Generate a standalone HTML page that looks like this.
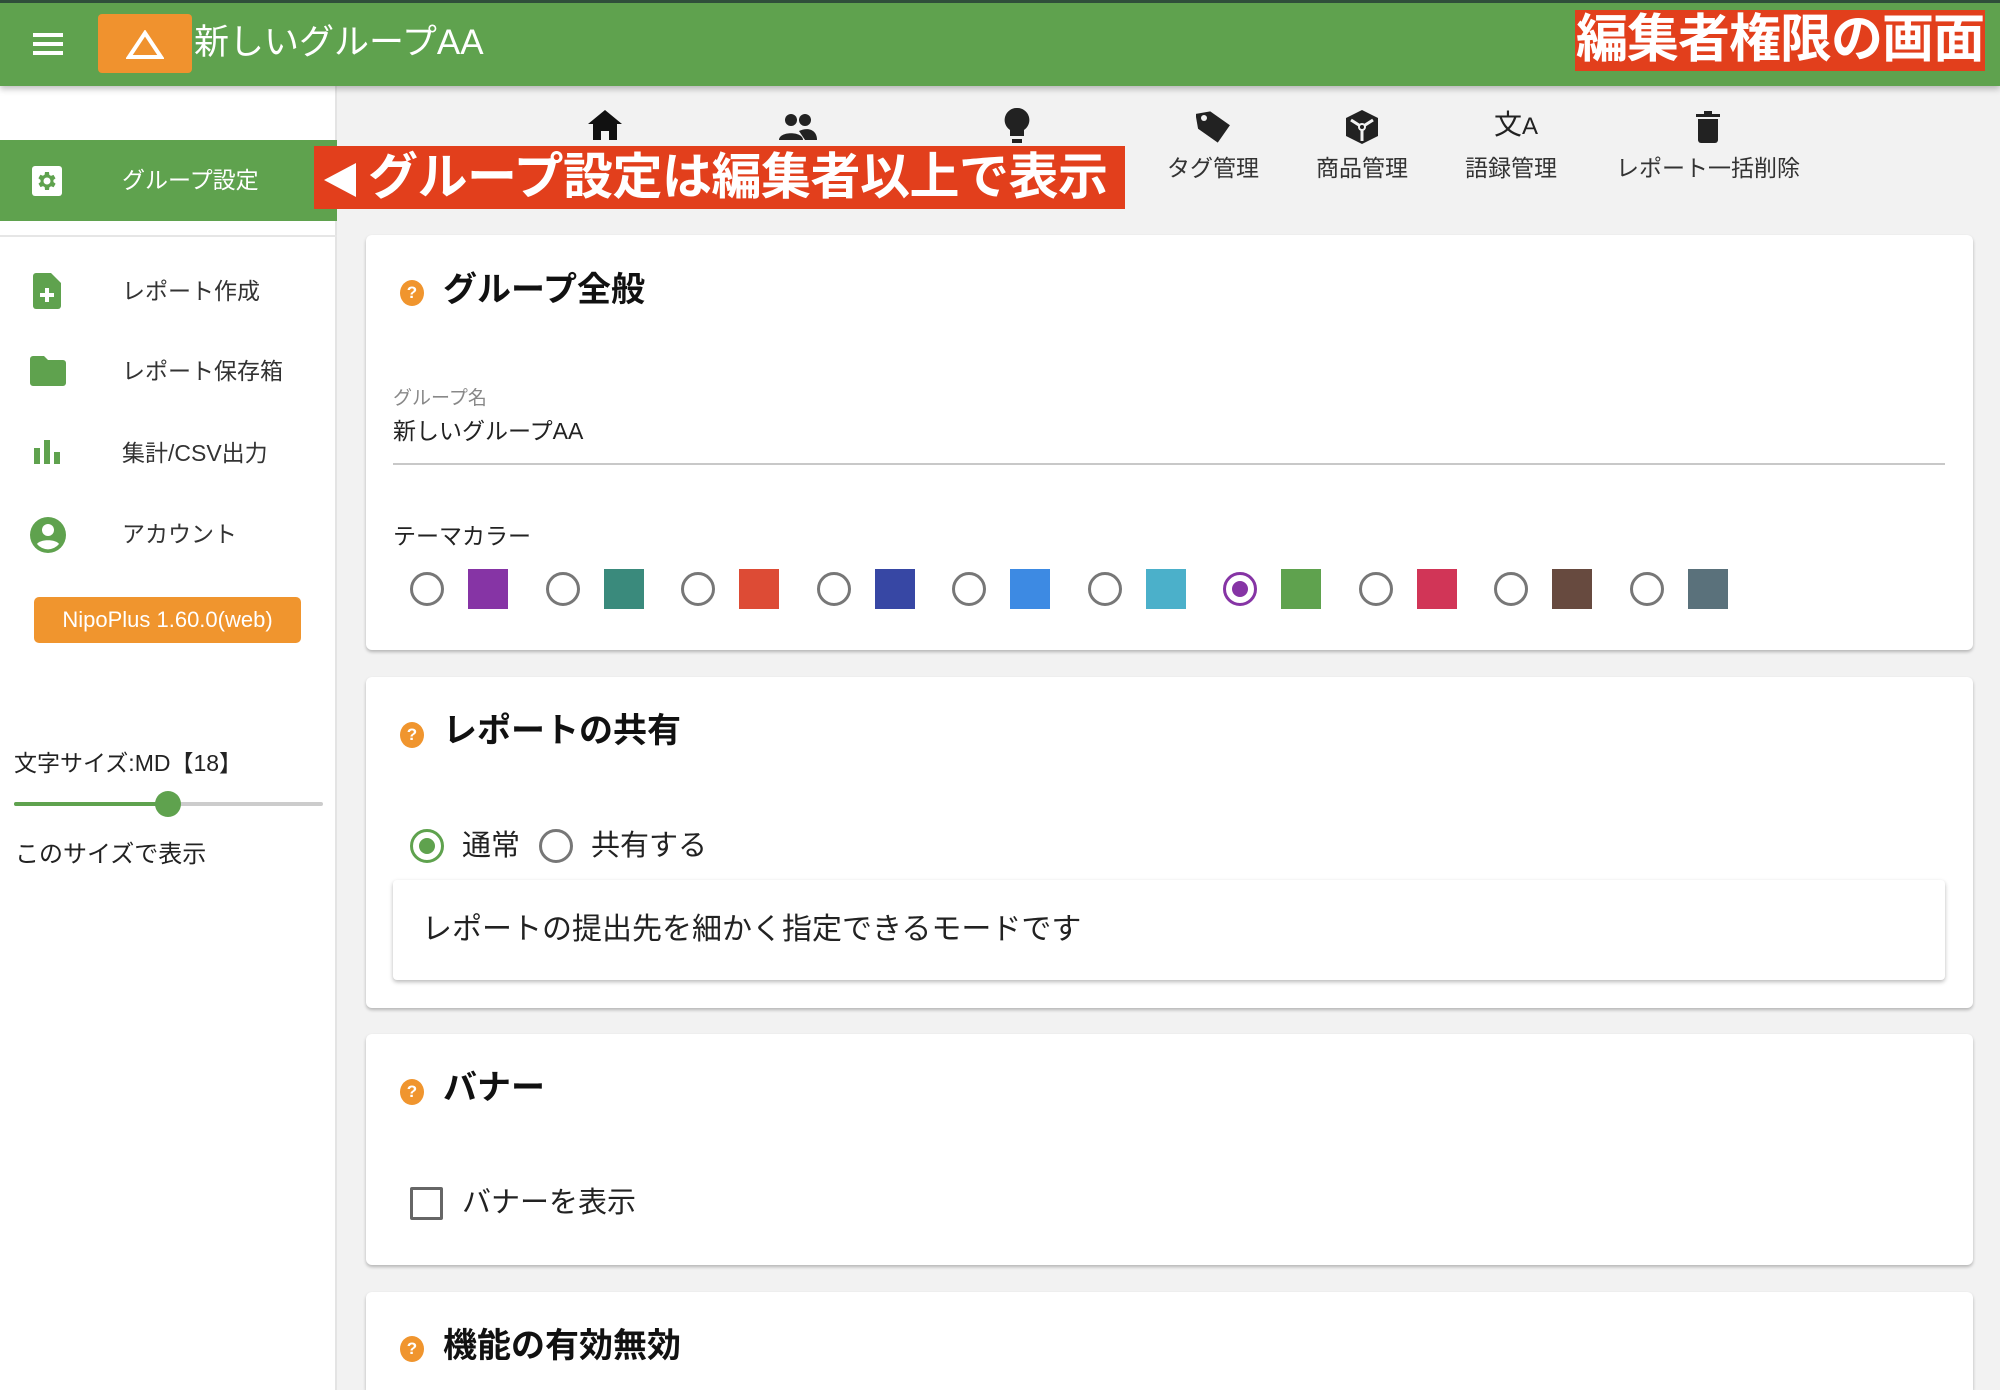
<!DOCTYPE html>
<html><head><meta charset="utf-8">
<style>
*{margin:0;padding:0;box-sizing:border-box}
html,body{width:2000px;height:1390px;overflow:hidden}
body{background:#f2f2f2;font-family:"Liberation Sans","Noto Sans CJK JP",sans-serif;color:#222;position:relative}
.a{position:absolute;white-space:nowrap}
.hdr{left:0;top:0;width:2000px;height:86px;background:#5fa24e;border-top:3px solid #2f4f3a;box-shadow:0 3px 6px rgba(0,0,0,.25);z-index:3}
.side{left:0;top:86px;width:337px;height:1304px;background:#fff;border-right:2px solid #e4e4e4}
.card{background:#fff;border-radius:6px;box-shadow:0 2px 3px rgba(0,0,0,.25);left:366px;width:1607px}
.help{width:24px;height:26px;border-radius:50%;background:#f0952e;color:#fff;font-size:17px;font-weight:bold;text-align:center;line-height:26px}
.ttl{font-size:34px;font-weight:bold;color:#111;line-height:40px}
.rad{width:34px;height:34px;border:3px solid #777;border-radius:50%}
.sw{width:40px;height:40px}
.nl{font-size:23px;color:#333;line-height:30px;transform:translateX(-50%)}
.si{font-size:23px;color:#333;line-height:30px;left:122px}
</style></head><body>
<div class="a hdr"></div>
<div class="a" style="left:33px;top:33px;width:30px;height:4px;background:#fff;z-index:4;box-shadow:0 9px 0 #fff,0 18px 0 #fff"></div>
<div class="a" style="left:98px;top:14px;width:94px;height:59px;background:#f0922e;border-radius:4px;z-index:4"></div>
<svg class="a" style="left:126px;top:30px;z-index:5" width="38" height="30" viewBox="0 0 38 30"><polygon points="19,3 35,27 3,27" fill="none" stroke="#fff" stroke-width="4"/></svg>
<div class="a" style="left:194px;top:21px;font-size:35px;line-height:44px;color:#fff;z-index:4">新しいグループAA</div>
<div class="a" style="left:1575px;top:10px;width:410px;height:61px;background:#e23f1c;z-index:4;color:#fff;font-size:52px;font-weight:bold;line-height:61px;text-align:center;letter-spacing:-1px">編集者権限の画面</div>

<div class="a side"></div>
<div class="a" style="left:0;top:140px;width:337px;height:81px;background:#5fa24e"></div>
<div class="a" style="left:32px;top:166px;width:30px;height:30px;background:#fff;border-radius:3px"></div>
<svg class="a" style="left:35px;top:169px" width="24" height="24" viewBox="0 0 24 24"><path fill="#5fa24e" d="M19.4 13a7.8 7.8 0 0 0 0-2l2.1-1.6-2-3.5-2.5 1a7 7 0 0 0-1.7-1L15 3h-4l-.4 2.8a7 7 0 0 0-1.7 1l-2.5-1-2 3.5L6.6 11a7.8 7.8 0 0 0 0 2l-2.1 1.6 2 3.5 2.5-1a7 7 0 0 0 1.7 1L11 21h4l.4-2.8a7 7 0 0 0 1.7-1l2.5 1 2-3.5zM13 15.5a3.5 3.5 0 1 1 0-7 3.5 3.5 0 0 1 0 7z" transform="translate(-1 0)"/></svg>
<div class="a" style="left:122px;top:165px;font-size:23px;line-height:30px;color:#fff">グループ設定</div>
<div class="a" style="left:0;top:235px;width:337px;height:2px;background:#e6e6e6"></div>

<svg class="a" style="left:33px;top:273px" width="28" height="36" viewBox="0 0 28 36"><path fill="#5fa24e" d="M3 0h15l10 10v23a3 3 0 0 1-3 3H3a3 3 0 0 1-3-3V3a3 3 0 0 1 3-3z"/><path d="M12 15h4v5h5v4h-5v5h-4v-5H7v-4h5z" fill="#fff"/></svg>
<div class="a si" style="top:276px">レポート作成</div>
<svg class="a" style="left:30px;top:356px" width="36" height="30" viewBox="0 0 36 30"><path fill="#5fa24e" d="M3 0h11l4 4h15a3 3 0 0 1 3 3v20a3 3 0 0 1-3 3H3a3 3 0 0 1-3-3V3a3 3 0 0 1 3-3z"/></svg>
<div class="a si" style="top:356px">レポート保存箱</div>
<svg class="a" style="left:34px;top:440px" width="26" height="24" viewBox="0 0 26 24"><rect x="0" y="8" width="6" height="16" fill="#5fa24e"/><rect x="10" y="0" width="6" height="24" fill="#5fa24e"/><rect x="20" y="12" width="6" height="12" fill="#5fa24e"/></svg>
<div class="a si" style="top:438px">集計/CSV出力</div>
<svg class="a" style="left:30px;top:517px" width="36" height="36" viewBox="0 0 36 36"><circle cx="18" cy="18" r="18" fill="#5fa24e"/><circle cx="18" cy="13" r="6" fill="#fff"/><path d="M7 27c3-5 19-5 22 0a14 14 0 0 1-22 0z" fill="#fff"/></svg>
<div class="a si" style="top:519px">アカウント</div>
<div class="a" style="left:34px;top:597px;width:267px;height:46px;background:#f0952e;border-radius:5px;color:#fff;font-size:22px;line-height:46px;text-align:center">NipoPlus 1.60.0(web)</div>
<div class="a" style="left:14px;top:748px;font-size:23px;line-height:30px;color:#222">文字サイズ:MD【18】</div>
<div class="a" style="left:14px;top:802px;width:309px;height:4px;background:#ccc;border-radius:2px"></div>
<div class="a" style="left:14px;top:802px;width:154px;height:4px;background:#5fa24e;border-radius:2px"></div>
<div class="a" style="left:155px;top:791px;width:26px;height:26px;background:#5fa24e;border-radius:50%"></div>
<div class="a" style="left:15px;top:840px;font-size:24px;line-height:30px;color:#222">このサイズで表示</div>

<svg class="a" style="left:588px;top:110px" width="34" height="30" viewBox="0 0 34 30"><path d="M17 0 0 14h5v16h8v-9h8v9h8V14h5z" fill="#111"/></svg>
<svg class="a" style="left:779px;top:114px" width="38" height="26" viewBox="0 0 38 26"><circle cx="12" cy="6" r="6" fill="#222"/><circle cx="26" cy="6" r="6" fill="#222"/><path d="M0 26c0-9 24-9 24 0z" fill="#222"/><path d="M20 17c8-4 18-2 18 9H26z" fill="#222"/></svg>
<svg class="a" style="left:1004px;top:108px" width="26" height="36" viewBox="0 0 26 36"><path d="M13 0a12 12 0 0 0-7 22v6h14v-6A12 12 0 0 0 13 0z" fill="#222"/><rect x="8" y="31" width="10" height="4" fill="#222"/></svg>
<div class="a nl" style="left:1213px;top:153px">タグ管理</div>
<div class="a nl" style="left:1362px;top:153px">商品管理</div>
<div class="a nl" style="left:1511px;top:153px">語録管理</div>
<div class="a nl" style="left:1708px;top:153px">レポート一括削除</div>
<svg class="a" style="left:1196px;top:109px" width="36" height="36" viewBox="0 0 36 36"><path d="M2 2h15l17 17-15 15L2 17z" fill="#222" transform="rotate(-10 18 18)"/><circle cx="8" cy="9" r="3" fill="#f2f2f2"/></svg>
<svg class="a" style="left:1346px;top:110px" width="32" height="34" viewBox="0 0 32 34"><path d="M16 0 32 8v18L16 34 0 26V8z" fill="#222"/><circle cx="16" cy="17" r="4" fill="#f2f2f2"/><path d="M16 17 5 10M16 17l11-7M16 17v14" stroke="#f2f2f2" stroke-width="3"/><circle cx="16" cy="17" r="2" fill="#222"/></svg>
<div class="a" style="left:1494px;top:108px;font-size:28px;line-height:34px;color:#222">文<span style="font-size:24px">A</span></div>
<svg class="a" style="left:1696px;top:111px" width="24" height="32" viewBox="0 0 24 32"><rect x="0" y="3" width="24" height="3" fill="#222"/><rect x="8" y="0" width="8" height="4" fill="#222"/><path d="M2 8h20v21a3 3 0 0 1-3 3H5a3 3 0 0 1-3-3z" fill="#222"/></svg>

<div class="a" style="left:314px;top:146px;width:811px;height:63px;background:#e23f1c"></div>
<svg class="a" style="left:322px;top:162px" width="36" height="36" viewBox="0 0 36 36"><polygon points="34,1 34,35 2,18" fill="#fff"/></svg>
<div class="a" style="left:368px;top:146px;font-size:50px;font-weight:bold;line-height:63px;color:#fff;letter-spacing:-0.5px">グループ設定は編集者以上で表示</div>

<div class="a card" style="top:235px;height:415px"></div>
<div class="a help" style="left:400px;top:280px">?</div>
<div class="a ttl" style="left:443px;top:270px">グループ全般</div>
<div class="a" style="left:393px;top:387px;font-size:19px;line-height:24px;color:#888">グループ名</div>
<div class="a" style="left:393px;top:416px;font-size:23px;line-height:30px;color:#222">新しいグループAA</div>
<div class="a" style="left:393px;top:463px;width:1552px;height:2px;background:#c8c8c8"></div>
<div class="a" style="left:393px;top:521px;font-size:23px;line-height:30px;color:#222">テーマカラー</div>
<div class="a rad" style="left:410px;top:572px"></div><div class="a sw" style="left:468px;top:569px;background:#8634a5"></div>
<div class="a rad" style="left:546px;top:572px"></div><div class="a sw" style="left:604px;top:569px;background:#3a8a7c"></div>
<div class="a rad" style="left:681px;top:572px"></div><div class="a sw" style="left:739px;top:569px;background:#dd4b35"></div>
<div class="a rad" style="left:817px;top:572px"></div><div class="a sw" style="left:875px;top:569px;background:#3747a4"></div>
<div class="a rad" style="left:952px;top:572px"></div><div class="a sw" style="left:1010px;top:569px;background:#3d8ae3"></div>
<div class="a rad" style="left:1088px;top:572px"></div><div class="a sw" style="left:1146px;top:569px;background:#4bb0ca"></div>
<div class="a rad" style="left:1223px;top:572px;border-color:#8634a5"></div><div class="a" style="left:1232px;top:581px;width:16px;height:16px;border-radius:50%;background:#8634a5"></div><div class="a sw" style="left:1281px;top:569px;background:#5fa24e"></div>
<div class="a rad" style="left:1359px;top:572px"></div><div class="a sw" style="left:1417px;top:569px;background:#d13557"></div>
<div class="a rad" style="left:1494px;top:572px"></div><div class="a sw" style="left:1552px;top:569px;background:#674a3f"></div>
<div class="a rad" style="left:1630px;top:572px"></div><div class="a sw" style="left:1688px;top:569px;background:#5a717b"></div>

<div class="a card" style="top:677px;height:331px"></div>
<div class="a help" style="left:400px;top:722px">?</div>
<div class="a ttl" style="left:443px;top:711px">レポートの共有</div>
<div class="a rad" style="left:410px;top:829px;border-color:#5fa24e"></div><div class="a" style="left:419px;top:838px;width:16px;height:16px;border-radius:50%;background:#5fa24e"></div>
<div class="a" style="left:462px;top:827px;font-size:29px;line-height:38px">通常</div>
<div class="a rad" style="left:539px;top:829px"></div>
<div class="a" style="left:591px;top:827px;font-size:29px;line-height:38px">共有する</div>
<div class="a" style="left:393px;top:880px;width:1552px;height:100px;background:#fff;border-radius:4px;box-shadow:0 2px 4px rgba(0,0,0,.28)"></div>
<div class="a" style="left:422px;top:911px;font-size:30px;line-height:38px;color:#222">レポートの提出先を細かく指定できるモードです</div>

<div class="a card" style="top:1034px;height:231px"></div>
<div class="a help" style="left:400px;top:1079px">?</div>
<div class="a ttl" style="left:443px;top:1068px">バナー</div>
<div class="a" style="left:410px;top:1187px;width:33px;height:33px;border:3px solid #666;border-radius:2px"></div>
<div class="a" style="left:462px;top:1184px;font-size:29px;line-height:38px">バナーを表示</div>

<div class="a card" style="top:1292px;height:98px;border-radius:6px 6px 0 0"></div>
<div class="a help" style="left:400px;top:1336px">?</div>
<div class="a ttl" style="left:443px;top:1326px">機能の有効無効</div>
</body></html>
